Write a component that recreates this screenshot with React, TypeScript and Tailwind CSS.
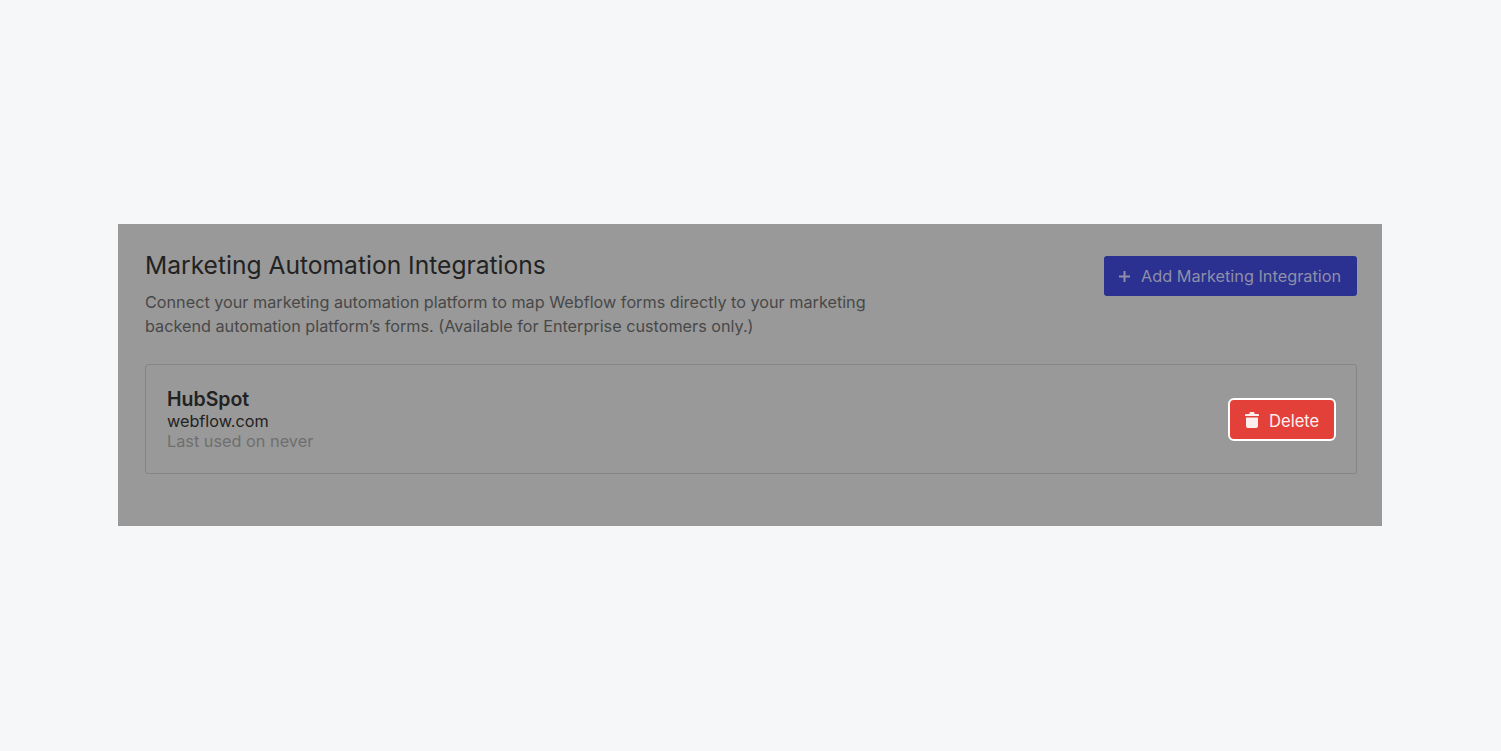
export default function App() {
  return (
    <div className="h-[751px] bg-[#f6f7f9] pl-[118px] pr-[119px] pt-[224px] font-['Inter',sans-serif]">
      <div className="h-[302px] bg-[#999999] pl-[27px] pr-[25px] pt-[25px]">
        <div className="flex justify-between">
          <div>
            <h1 className="text-[24.6px] leading-[32px] font-normal text-[#222222]">Marketing Automation Integrations</h1>
            <p className="mt-[9px] w-[760px] text-[16.22px] leading-[24px] text-[#484848]">
              Connect your marketing automation platform to map Webflow forms directly to your marketing backend automation platform’s forms. (Available for Enterprise customers only.)
            </p>
          </div>
          <button className="mt-[7px] flex h-[40px] w-[253px] items-center rounded-[3px] bg-[#2a3190] pl-[15px] text-[16.3px] text-[#8f8fa8]">
            <svg width="11" height="11" viewBox="0 0 11 11" className="mr-[11px]">
              <path d="M5.5 0v11M0 5.5h11" stroke="currentColor" strokeWidth="2" fill="none" />
            </svg>
            Add Marketing Integration
          </button>
        </div>
        <div className="mt-[26px] flex h-[110px] items-center justify-between rounded-[3px] border border-[#858585] pl-[21px] pr-[20px]">
          <div className="pt-[2px]">
            <div className="mb-[1px] text-[19.5px] leading-[21px] font-semibold text-[#222222]">HubSpot</div>
            <div className="text-[16.2px] leading-[20px] text-[#222222]">webflow.com</div>
            <div className="text-[16.3px] leading-[21px] text-[#6f6f6f]">Last used on never</div>
          </div>
          <button className="flex h-[43px] w-[108px] items-center rounded-[6px] border-2 border-white bg-[#e4403a] pl-[15px] pt-[4px] text-[16.6px] text-[#fdeeee]">
            <svg width="14" height="16" viewBox="0 0 14 16" className="mr-[10px] -mt-[2px]" fill="currentColor">
              <path d="M5.5 0h3a1 1 0 0 1 1 1v1h3.5a1 1 0 0 1 1 1v1H0V3a1 1 0 0 1 1-1h3.5V1a1 1 0 0 1 1-1zM1 5.5h12V14a2 2 0 0 1-2 2H3a2 2 0 0 1-2-2z" />
            </svg>
            Delete
          </button>
        </div>
      </div>
    </div>
  );
}
